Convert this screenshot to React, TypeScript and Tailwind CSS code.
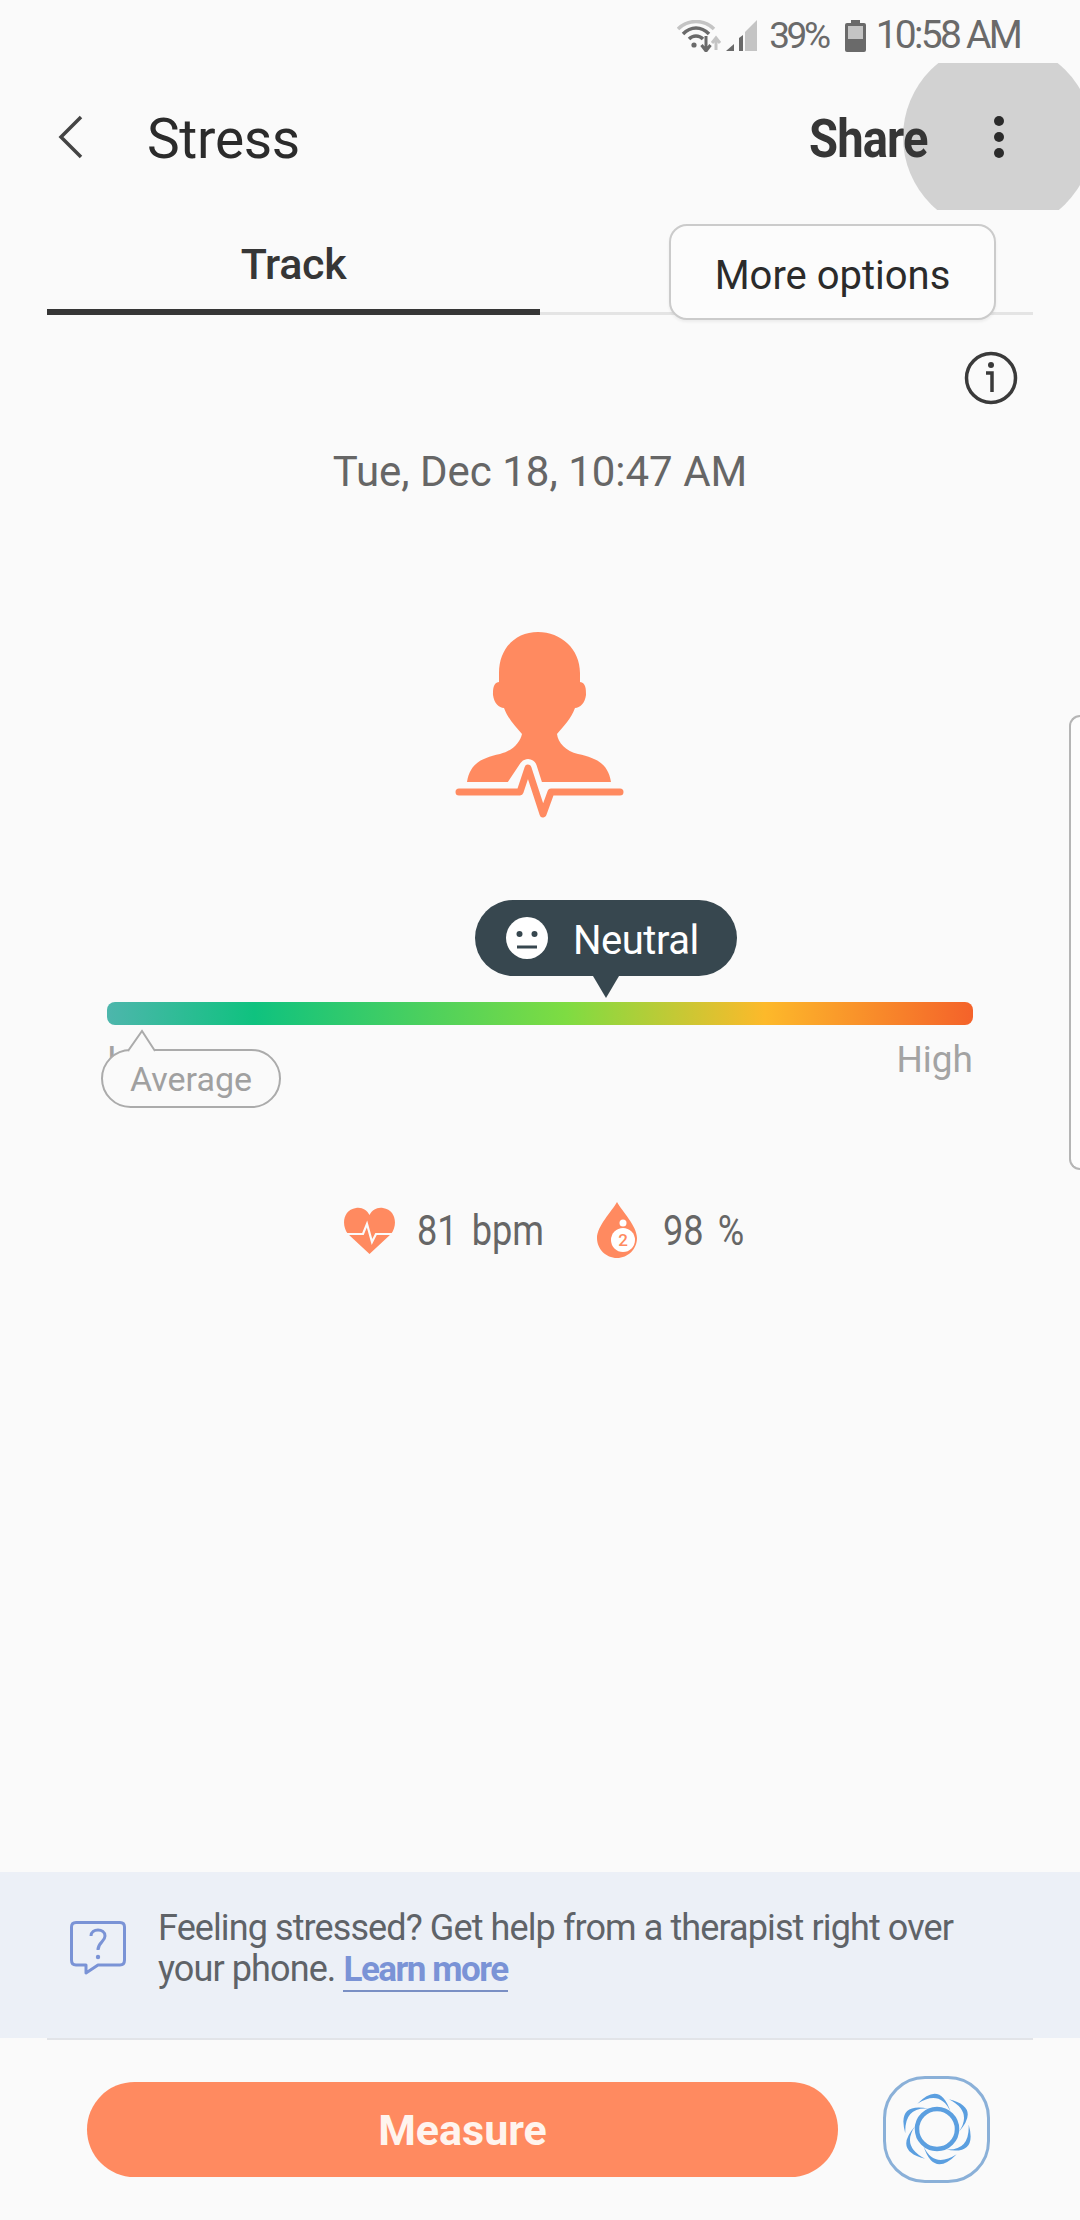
export default function App() {
  const petals = [0, 60, 120, 180, 240, 300];
  return (
    <div className="relative w-[1080px] h-[2220px] overflow-hidden bg-[#fafafa] flex flex-col font-['Roboto',sans-serif]">
      {/* status bar */}
      <div className="h-[63px] flex items-center justify-end pr-[60px] pt-[8px] text-[#6a6a6a] text-[39px]">
        <svg width="80" height="32" viewBox="0 0 80 32" className="mr-[12px]">
          <path d="M1 9 C11 -1 27 -1 37 9" stroke="#c4c4c4" strokeWidth="3.5" fill="none" />
          <path d="M6 14 C14 6 24 6 32 14" stroke="#6a6a6a" strokeWidth="3.5" fill="none" />
          <path d="M12 19 C16 15 22 15 26 19" stroke="#6a6a6a" strokeWidth="3.5" fill="none" />
          <circle cx="17" cy="25" r="2.6" fill="#6a6a6a" />
          <path d="M29 16 V29 M24.5 25 L29 31 L33.5 25" stroke="#6a6a6a" strokeWidth="3" fill="none" />
          <path d="M39 30 V19 M35 23 L39 18 L43 23" stroke="#c4c4c4" strokeWidth="3" fill="none" />
          <path d="M49 31 L57 24 V31 Z" fill="#6a6a6a" />
          <path d="M62 31 V18 L66 15 V31 Z" fill="#6a6a6a" />
          <path d="M68 31 V12 L80 0 V31 Z" fill="#c4c4c4" />
        </svg>
        <span className="text-[37px] tracking-[-3.4px] mr-[17px]">39%</span>
        <svg width="21" height="32" viewBox="0 0 21 32" className="mr-[10px]">
          <rect x="6" y="0" width="9" height="4" fill="#6a6a6a" />
          <rect x="0" y="3" width="21" height="29" rx="2" fill="#6a6a6a" />
          <rect x="3" y="6" width="15" height="13" fill="#c4c4c4" />
        </svg>
        <span className="tracking-[-2.75px]">10:58 AM</span>
      </div>

      {/* header */}
      <div className="relative h-[147px] overflow-hidden flex items-center">
        <div className="absolute left-[903px] top-[-21px] w-[190px] h-[190px] rounded-full bg-[#d2d2d2]"></div>
        <svg width="26" height="44" viewBox="0 0 26 44" className="relative ml-[58px]">
          <path d="M23 2 L3 22 L23 42" stroke="#444444" strokeWidth="3.5" fill="none" />
        </svg>
        <span className="relative ml-[63px] mt-[5px] text-[55px] tracking-[-0.3px] text-[#2b2b2b] leading-none">Stress</span>
        <span className="absolute left-[809px] top-[50px] text-[53px] font-bold text-[#363636] leading-none tracking-[-1px] scale-x-[0.89] origin-left">Share</span>
        <div className="absolute left-[994px] top-[53px] flex flex-col gap-[6px]">
          <div className="w-[10px] h-[10px] rounded-full bg-[#2b2b2b]"></div>
          <div className="w-[10px] h-[10px] rounded-full bg-[#2b2b2b]"></div>
          <div className="w-[10px] h-[10px] rounded-full bg-[#2b2b2b]"></div>
        </div>
      </div>

      {/* tabs */}
      <div className="mx-[47px] h-[105px] flex items-end border-b-[3px] border-[#e4e4e4]">
        <div className="w-[493px] h-[103px] mb-[-3px] border-b-[6px] border-[#363636] flex justify-center pt-[27px]">
          <span className="text-[43px] font-medium text-[#363636] leading-[50px] tracking-[-0.3px]">Track</span>
        </div>
      </div>

      {/* info */}
      <div className="flex justify-end pr-[62px] mt-[36px]">
        <svg width="54" height="54" viewBox="0 0 54 54">
          <circle cx="27" cy="27" r="24.5" stroke="#3a3a3a" strokeWidth="3.5" fill="none" />
          <circle cx="27" cy="14" r="3" fill="#3a3a3a" />
          <path d="M22 22 H28 V41" stroke="#3a3a3a" strokeWidth="3.5" fill="none" />
        </svg>
      </div>

      {/* date */}
      <div className="mt-[43px] text-center text-[42px] leading-[48px] text-[#666666]">Tue, Dec 18, 10:47 AM</div>

      {/* stress figure */}
      <div className="mt-[115px] flex justify-center">
        <svg width="240" height="230" viewBox="0 0 240 230">
          <path
            d="M118 21 C95 21 79 38 79 62 L79 71 C73 72 73 78 73 84 C74 92 79 97 84 97 C88 108 96 116 102 123 C100 132 92 140 80 143 C62 147 50 152 47 171 L191 171 C188 152 176 147 158 143 C146 140 138 132 137 123 C143 116 151 108 155 97 C160 97 165 92 166 84 C166 78 166 72 160 71 L160 62 C160 38 141 21 118 21 Z"
            fill="#ff8a60"
          />
          <path d="M92 181 L108 157 L123 204 L131 181" stroke="#fafafa" strokeWidth="18" fill="none" strokeLinejoin="round" />
          <path d="M36 175 H100 M131 175 H203" stroke="#fafafa" strokeWidth="4" fill="none" />
          <path d="M39 181 H100 L108 157 L123 203 L131 181 H200" stroke="#ff8a60" strokeWidth="7" fill="none" strokeLinecap="round" strokeLinejoin="round" />
        </svg>
      </div>

      {/* neutral pill */}
      <div className="relative ml-[475px] mt-[59px] w-[262px] h-[76px] rounded-[38px] bg-[#37474f] flex items-center pl-[31px]">
        <svg width="42" height="42" viewBox="0 0 42 42">
          <circle cx="21" cy="21" r="21" fill="#ffffff" />
          <circle cx="13.5" cy="17" r="3" fill="#37474f" />
          <circle cx="28.5" cy="17" r="3" fill="#37474f" />
          <path d="M11 30 H31" stroke="#37474f" strokeWidth="3" />
        </svg>
        <span className="ml-[25px] mt-[5px] text-[40px] tracking-[-0.5px] text-white leading-none">Neutral</span>
        <svg width="26" height="22" viewBox="0 0 26 22" className="absolute left-[118px] top-[76px]">
          <path d="M0 0 H26 L13 22 Z" fill="#37474f" />
        </svg>
      </div>

      {/* gradient bar */}
      <div className="mx-[107px] mt-[26px] h-[23px] rounded-[8px] bg-[linear-gradient(90deg,#4db6ac_0%,#0fc27f_17%,#7edc42_53%,#fdb92a_76%,#f4622a_100%)]"></div>

      {/* labels */}
      <div className="relative mx-[107px] mt-[12px] h-[42px] flex justify-between text-[37px] leading-[42px] text-[#a3a3a3]">
        <span className="pt-[2px]">Low</span>
        <span className="pt-[2px]">High</span>
        <div className="absolute left-[-6px] top-[12px] w-[180px] h-[59px] rounded-[30px] border-2 border-[#ababab] bg-[#fafafa] flex items-center justify-center text-[34px] leading-none text-[#a0a0a0]">
          Average
          <svg width="30" height="24" viewBox="0 0 30 24" className="absolute left-[25px] top-[-22px]">
            <path d="M0 22 L14 2 L27 22" stroke="#ababab" strokeWidth="2" fill="#fafafa" />
            <path d="M2 22.5 H25 V24 H2 Z" fill="#fafafa" />
          </svg>
        </div>
      </div>

      {/* stats */}
      <div className="mt-[121px] pl-[343px] h-[60px] flex items-center text-[42px] text-[#666666]">
        <svg width="53" height="47" viewBox="0 0 53 47">
          <path d="M26.5 47 L5 27 C-2 18 0 3 13 1 C19 0 24 3 26.5 8 C29 3 34 0 40 1 C53 3 55 18 48 27 Z" fill="#ff8a60" />
          <path d="M4 27 H20 L24 17 L29 35 L33 27 H49" stroke="#fafafa" strokeWidth="2.2" fill="none" />
        </svg>
        <span className="ml-[21px] w-[125px] whitespace-nowrap origin-left scale-x-[0.86] [word-spacing:6px]">81 bpm</span>
        <svg width="42" height="56" viewBox="0 0 42 56" className="ml-[54px]">
          <path d="M21 0 C26 9 41 24 41 36 C41 47 32 56 21 56 C10 56 1 47 1 36 C1 24 16 9 21 0 Z" fill="#ff8a60" />
          <circle cx="27" cy="21" r="3.5" fill="#ffffff" />
          <circle cx="27" cy="38" r="12" fill="#ffffff" />
          <text x="27" y="44" textAnchor="middle" fontSize="17" fontWeight="500" fill="#ff8a60">2</text>
        </svg>
        <span className="ml-[25px] w-[80px] whitespace-nowrap origin-left scale-x-[0.86] [word-spacing:6px]">98 %</span>
      </div>

      {/* therapist banner */}
      <div className="mt-auto h-[166px] bg-[#ecf0f7] flex pl-[70px] pt-[36px]">
        <svg width="56" height="54" viewBox="0 0 56 54" className="mt-[13px]">
          <path d="M6 1.5 H50 Q54.5 1.5 54.5 6 V39 Q54.5 44 50 44 H28 L16 52 V44 H6 Q1.5 44 1.5 39 V6 Q1.5 1.5 6 1.5 Z" stroke="#7a93d6" strokeWidth="3" fill="none" strokeLinejoin="round" />
          <path d="M21 15 C21 7 35 7 35 15 C35 21 28 21 28 29" stroke="#7a93d6" strokeWidth="3" fill="none" />
          <circle cx="28" cy="36" r="2.2" fill="#7a93d6" />
        </svg>
        <p className="ml-[32px] w-[830px] text-[36px] leading-[41px] tracking-[-0.9px] text-[#5f6368]">
          Feeling stressed? Get help from a therapist right over your phone.{" "}
          <span className="text-[35px] font-bold text-[#7a93d6] tracking-[-1.5px] border-b-2 border-[#7a8fc4]">Learn more</span>
        </p>
      </div>
      <div className="mx-[47px] h-[2px] bg-[#e2e4e8]"></div>

      {/* bottom actions */}
      <div className="h-[180px] flex items-center pl-[87px] pb-[2px]">
        <div className="w-[751px] h-[95px] rounded-[48px] bg-[#ff8a60] flex items-center justify-center pt-[2px] text-[43px] font-bold text-[#fff4ee]">Measure</div>
        <div className="ml-[45px] w-[107px] h-[107px] rounded-[42px] border-[3px] border-[#8ab0d8] flex items-center justify-center">
          <svg width="74" height="74" viewBox="-37 -37 74 74">
            <circle cx="0" cy="0" r="20" stroke="#5b9fe0" strokeWidth="4.5" fill="none" />
            {petals.map((a) => (
              <path key={a} transform={`rotate(${a})`} d="M-19.7 -25.2 Q3.1 -48.75 13.5 -17.3 Q3.1 -39.75 -19.7 -25.2 Z" fill="#5b9fe0" />
            ))}
          </svg>
        </div>
      </div>

      {/* side handle */}
      <div className="absolute left-[1069px] top-[715px] w-[11px] h-[455px] rounded-l-[14px] border-2 border-r-0 border-[#b5b5b5] bg-[#fdfdfd]"></div>

      {/* more options tooltip */}
      <div className="absolute left-[669px] top-[224px] w-[327px] h-[96px] rounded-[18px] border-2 border-[#cbcbcb] bg-[#fcfcfc] shadow-[0_2px_3px_rgba(0,0,0,0.06)] flex items-center justify-center pt-[7px] text-[40px] text-[#2b2b2b]">
        More options
      </div>
    </div>
  );
}
